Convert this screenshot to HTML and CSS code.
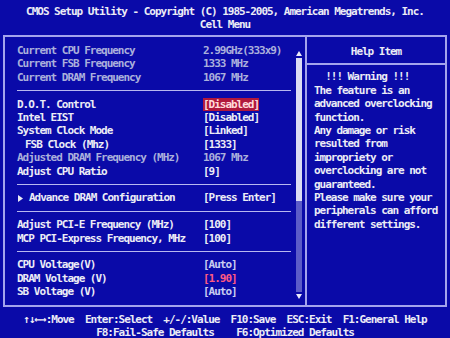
FILE: index.html
```html
<!DOCTYPE html>
<html lang="en">
<head>
    <meta charset="UTF-8">
    <title>CMOS Setup Utility - Cell Menu</title>
    <link rel="stylesheet" href="styles.css">
</head>
<body>
    <div class="screen">
        <header class="title">
            <div class="line">CMOS Setup Utility - Copyright (C) 1985-2005, American Megatrends, Inc.</div>
            <div class="line">Cell Menu</div>
        </header>

        <main class="frame">
            <section class="menu">
                <div class="items">
                    <div class="row dim"><span>Current CPU Frequency</span><span>2.99GHz(333x9)</span></div>
                    <div class="row dim"><span>Current FSB Frequency</span><span>1333 MHz</span></div>
                    <div class="row dim"><span>Current DRAM Frequency</span><span>1067 MHz</span></div>
                    <div class="sep"></div>
                    <div class="row"><span>D.O.T. Control</span><span><span class="selected">[Disabled]</span></span></div>
                    <div class="row"><span>Intel EIST</span><span>[Disabled]</span></div>
                    <div class="row"><span>System Clock Mode</span><span>[Linked]</span></div>
                    <div class="row"><span class="indent">FSB Clock (Mhz)</span><span>[1333]</span></div>
                    <div class="row dim"><span>Adjusted DRAM Frequency (MHz)</span><span>1067 Mhz</span></div>
                    <div class="row"><span>Adjust CPU Ratio</span><span>[9]</span></div>
                    <div class="sep"></div>
                    <div class="row"><span><svg class="pointer" width="5" height="7" viewBox="0 0 5 7"><path d="M0 0 L5 3.5 L0 7 Z" fill="#e8e8f4"/></svg>Advance DRAM Configuration</span><span>[Press Enter]</span></div>
                    <div class="sep"></div>
                    <div class="row"><span>Adjust PCI-E Frequency (MHz)</span><span>[100]</span></div>
                    <div class="row"><span>MCP PCI-Express Frequency, MHz</span><span>[100]</span></div>
                    <div class="sep"></div>
                    <div class="row"><span>CPU Voltage(V)</span><span class="soft">[Auto]</span></div>
                    <div class="row"><span>DRAM Voltage (V)</span><span class="warn">[1.90]</span></div>
                    <div class="row"><span>SB Voltage (V)</span><span class="soft">[Auto]</span></div>
                </div>
                <div class="scroll">
                    <svg width="6" height="5" viewBox="0 0 6 5"><path d="M3 0 L6 5 L0 5 Z" fill="#ececfa"/></svg>
                    <div class="track"><div class="thumb"></div></div>
                    <svg width="6" height="5" viewBox="0 0 6 5"><path d="M0 0 L6 0 L3 5 Z" fill="#ececfa"/></svg>
                </div>
            </section>

            <aside class="help">
                <div class="help-title">Help Item</div>
                <p class="help-text">  !!! Warning !!!
The feature is an
advanced overclocking
function.
Any damage or risk
resulted from
impropriety or
overclocking are not
guaranteed.
Please make sure your
peripherals can afford
different settings.</p>
            </aside>
        </main>

        <footer class="keys">
            <div class="line">↑↓←→:Move  Enter:Select  +/-/:Value  F10:Save  ESC:Exit  F1:General Help</div>
            <div class="line">F8:Fail-Safe Defaults    F6:Optimized Defaults</div>
        </footer>
    </div>
</body>
</html>
```

FILE: styles.css
```css
body {
    margin: 0;
    padding: 0;
    background-color: #0a0aa8;
    color: #ececf6;
    font-family: 'DejaVu Sans Mono', 'Liberation Mono', monospace;
    font-size: 11px;
    font-weight: bold;
    letter-spacing: -1.02px;
    line-height: 13.4px;
}
.screen {
    width: 450px;
    height: 338px;
    overflow: hidden;
}
.line {
    white-space: pre;
}
.title {
    padding-top: 5px;
    height: 30px;
    text-align: center;
}
.frame {
    margin: 0 3px;
    height: 268px;
    border: 2px solid #a4a4ec;
    display: grid;
    grid-template-columns: 300px 1fr;
}
.menu {
    display: flex;
    padding: 7px 0 0 12px;
}
.items {
    flex: 1;
    padding-right: 5px;
}
.row {
    display: grid;
    grid-template-columns: 186px 1fr;
    white-space: pre;
}
.row.dim {
    color: #aab0dc;
}
.indent {
    padding-left: 8px;
}
.pointer {
    margin: 0 6px 0 1px;
    vertical-align: -0.5px;
}
.selected {
    background-color: #b0183c;
    color: #ffdada;
}
.soft {
    color: #c8ccf0;
}
.warn {
    color: #ff5a82;
}
.sep {
    height: 13.4px;
    display: flex;
    align-items: center;
}
.sep::before {
    content: '';
    flex: 1;
    height: 1px;
    background-color: #b8b8f0;
}
.scroll {
    width: 6px;
    margin-right: 3px;
    padding: 7px 0 6px;
    display: flex;
    flex-direction: column;
    align-items: center;
    gap: 2px;
}
.track {
    flex: 1;
    width: 6px;
    background-color: #5c5cc8;
}
.thumb {
    height: 143px;
    background-color: #dcdcf4;
}
.help {
    border-left: 2px solid #a4a4ec;
}
.help-title {
    text-align: center;
    padding: 8px 0 5px;
    border-bottom: 2px solid #a4a4ec;
}
.help-text {
    margin: 0;
    padding: 5px 0 0 7px;
    white-space: pre;
}
.keys {
    padding-top: 6px;
    text-align: center;
}
```
